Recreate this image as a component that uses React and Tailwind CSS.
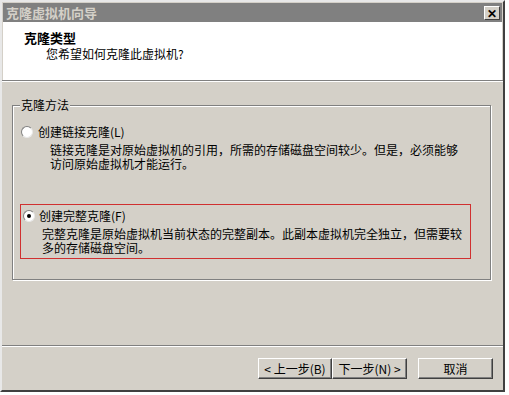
import React from 'react';

const font = { fontFamily: '"Noto Sans CJK SC", "Noto Sans", sans-serif' };

function Radio({ checked }) {
  return (
    <span className="relative inline-block w-[12px] h-[12px] rounded-full bg-white border border-t-[#808080] border-l-[#808080] border-r-[#e8e8e8] border-b-[#e8e8e8] shrink-0">
      {checked && <span className="absolute left-[3px] top-[3px] w-[4px] h-[4px] rounded-full bg-black" />}
    </span>
  );
}

function Button({ children, className = '' }) {
  return (
    <button
      className={`h-[21px] bg-[#d4d0c8] border border-t-white border-l-white border-r-[#404040] border-b-[#404040] shadow-[inset_-1px_-1px_0_#808080] text-[12px] text-black leading-none ${className}`}
    >
      {children}
    </button>
  );
}

export default function App() {
  return (
    <div className="w-[509px] h-[395px] bg-white" style={font}>
      <div className="w-[505px] h-[392px] bg-[#d4d0c8] border-t-[2px] border-l-[2px] border-t-[#e8e8e8] border-l-[#e8e8e8] border-r-[2px] border-b-[2px] border-r-[#404040] border-b-[#404040] flex flex-col">
        {/* title bar */}
        <div className="mx-[1px] mt-[1px] h-[19px] bg-[#808080] flex items-center justify-between pl-[3px] pr-[2px]">
          <span className="text-[13px] font-bold text-[#d4d0c8] leading-none">克隆虚拟机向导</span>
          <span className="w-[16px] h-[14px] bg-[#d4d0c8] border border-t-white border-l-white border-r-[#404040] border-b-[#404040] flex items-center justify-center text-[12px] font-bold leading-none text-black">✕</span>
        </div>

        {/* header */}
        <div className="h-[58px] bg-white mx-[1px] pl-[21px] pt-[8px]">
          <div className="text-[13px] font-bold text-black leading-[16px]">克隆类型</div>
          <div className="text-[12px] text-black leading-[16px] pl-[22px]">您希望如何克隆此虚拟机?</div>
        </div>
        <div className="h-[1px] bg-[#808080]" />
        <div className="h-[1px] bg-white" />

        {/* body */}
        <div className="flex-1 pt-[23px] pl-[10px] pr-[12px]">
          <div className="relative w-[479px] h-[175px] border border-[#808080] shadow-[inset_1px_1px_0_#fff,1px_1px_0_#fff]">
            <span className="absolute left-[7px] top-[-9px] px-[1px] bg-[#d4d0c8] text-[12px] leading-[16px] text-black">克隆方法</span>
            <div className="pl-[8px] pt-[18px]">
              <div className="flex items-center gap-[5px] h-[15px]">
                <Radio />
                <span className="text-[12px] text-black leading-[15px]">创建链接克隆(L)</span>
              </div>
              <div className="pl-[29px] pt-[4px] text-[12px] text-black leading-[14px]">
                <div>链接克隆是对原始虚拟机的引用，所需的存储磁盘空间较少。但是，必须能够</div>
                <div>访问原始虚拟机才能运行。</div>
              </div>
            </div>
            <div className="ml-[7px] mt-[33px] w-[451px] h-[55px] border border-[#d03030] pl-[2px] pt-[3px]">
              <div className="flex items-center gap-[4px] h-[15px]">
                <Radio checked />
                <span className="text-[12px] text-black leading-[15px]">创建完整克隆(F)</span>
              </div>
              <div className="pl-[19px] pt-[4px] text-[12px] text-black leading-[14px]">
                <div>完整克隆是原始虚拟机当前状态的完整副本。此副本虚拟机完全独立，但需要较</div>
                <div>多的存储磁盘空间。</div>
              </div>
            </div>
          </div>
        </div>

        <div className="h-[1px] bg-[#808080]" />
        <div className="h-[1px] bg-white" />
        {/* buttons */}
        <div className="h-[43px] flex items-start pt-[11px] pl-[256px]">
          <Button className="w-[74px]">&lt; 上一步(B)</Button>
          <Button className="w-[75px]">下一步(N) &gt;</Button>
          <Button className="w-[75px] ml-[11px]">取消</Button>
        </div>
      </div>
    </div>
  );
}
